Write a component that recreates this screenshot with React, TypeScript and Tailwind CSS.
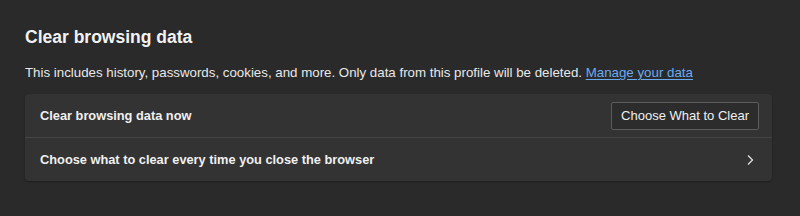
export default function App() {
  return (
    <div
      className="w-[800px] h-[216px] bg-[#2a2a2a] text-white px-[25px] pt-[26px]"
      style={{ fontFamily: '"Liberation Sans", Arial, sans-serif' }}
    >
      <h2 className="text-[17.5px] font-bold leading-[22px] text-[#f2f2f2]">Clear browsing data</h2>
      <p className="mt-[17px] text-[13.3px] leading-[16px] text-[#e8e8e8]">
        This includes history, passwords, cookies, and more. Only data from this profile will be deleted.{" "}
        <a href="#" className="text-[#6aaaf0] underline underline-offset-2">
          Manage your data
        </a>
      </p>

      <div className="mt-[13px] w-[747px] rounded-[4px] bg-[#333333] shadow-[0_1px_2px_rgba(0,0,0,0.3)]">
        {/* Clear now */}
        <div className="flex items-center justify-between h-[44px] pl-[15px] pr-[13px] border-b border-[#444444]">
          <span className="text-[12.8px] font-bold text-[#f0f0f0]">Clear browsing data now</span>
          <button className="h-[28px] px-[9px] text-[13px] text-[#f0f0f0] bg-[#2c2c2c] border border-[#5c5c5c] rounded-[2px]">
            Choose What to Clear
          </button>
        </div>

        {/* On close */}
        <div className="flex items-center justify-between h-[43px] pl-[15px] pr-[17px]">
          <span className="text-[12.8px] font-bold text-[#f0f0f0]">
            Choose what to clear every time you close the browser
          </span>
          <svg width="10" height="12" viewBox="0 0 10 12" fill="none">
            <path d="M3 1.5L7.5 6L3 10.5" stroke="#e0e0e0" strokeWidth="1.3" />
          </svg>
        </div>
      </div>
    </div>
  );
}
